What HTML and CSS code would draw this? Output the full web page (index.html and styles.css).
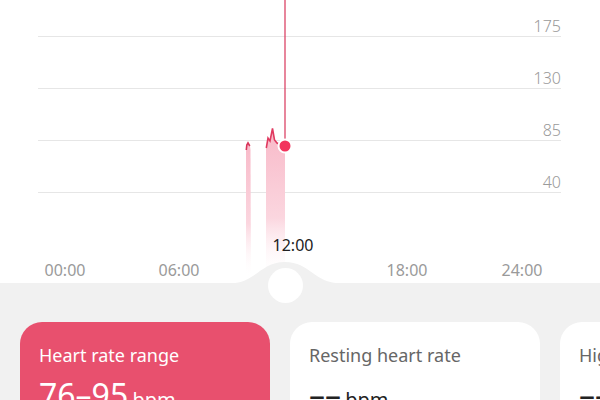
FILE: index.html
```html
<!DOCTYPE html>
<html lang="en">
<head>
<meta charset="utf-8">
<link rel="stylesheet" href="styles.css">
</head>
<body>
<section class="chart">
  <svg class="plot" width="600" height="283" viewBox="0 0 600 283" xmlns="http://www.w3.org/2000/svg">
    <defs>
      <linearGradient id="fillg" x1="0" y1="0" x2="0" y2="1">
        <stop offset="0" stop-color="#f8b9c8"/>
        <stop offset="0.6" stop-color="#fbd6df"/>
        <stop offset="1" stop-color="#ffffff" stop-opacity="0"/>
      </linearGradient>
    </defs>
    <g stroke="#e6e6e6" stroke-width="1">
      <line x1="38" y1="36.5" x2="561" y2="36.5"/>
      <line x1="38" y1="88.5" x2="561" y2="88.5"/>
      <line x1="38" y1="140.5" x2="561" y2="140.5"/>
      <line x1="38" y1="192.5" x2="561" y2="192.5"/>
    </g>
    <g class="ylab" text-anchor="end">
      <text x="561" y="32">175</text>
      <text x="561" y="84">130</text>
      <text x="561" y="136">85</text>
      <text x="561" y="188">40</text>
    </g>
    <path d="M246,150 L246.5,145 L248,142.5 L250,146 L250.5,150 L251,278 L246,278 Z" fill="url(#fillg)"/>
    <path d="M246.3,150 L246.8,145 L248,142.8 L249.8,146" fill="none" stroke="#d8345a" stroke-width="1.6"/>
    <path d="M266,148 L268,138 L270,141 L272.5,128 L274.5,140 L277,143 L285,146 L285,278 L266,278 Z" fill="url(#fillg)"/>
    <path d="M266.3,148 L268,138 L270,141 L272.5,128.5 L274.5,140 L277,143 L283,145.5" fill="none" stroke="#e03a60" stroke-width="1.6"/>
    <line x1="285" y1="0" x2="285" y2="142" stroke="#d8345a" stroke-width="1.2"/>
    <circle cx="285" cy="146" r="6.5" fill="#f2335d" stroke="#ffffff" stroke-width="2"/>
    <text class="sel" x="293" y="251" text-anchor="middle">12:00</text>
    <g class="xlab" text-anchor="middle">
      <text x="65" y="276">00:00</text>
      <text x="179" y="276">06:00</text>
      <text x="407" y="276">18:00</text>
      <text x="522" y="276">24:00</text>
    </g>
    <path d="M228,283.5 C256,283.5 260,262 285,262 C310,262 314,283.5 342,283.5 Z" fill="#f1f1f1"/>
  </svg>
  <div class="handle"></div>
</section>
<section class="stats">
  <div class="card card-active">
    <div class="card-title">Heart rate range</div>
    <div class="card-value"><span class="num">76–95</span> <span class="unit">bpm</span></div>
  </div>
  <div class="card">
    <div class="card-title">Resting heart rate</div>
    <div class="card-value"><span class="num">––</span> <span class="unit">bpm</span></div>
  </div>
  <div class="card">
    <div class="card-title">High heart rate</div>
    <div class="card-value"><span class="num">––</span> <span class="unit">bpm</span></div>
  </div>
</section>
</body>
</html>
```
FILE: styles.css
```css
html, body {
  margin: 0;
  padding: 0;
}
body {
  width: 600px;
  height: 400px;
  overflow: hidden;
  background: #f1f1f1;
  font-family: "Noto Sans", "Open Sans", sans-serif;
}
.chart {
  position: relative;
  height: 283px;
  background: #ffffff;
}
.plot {
  display: block;
  overflow: visible;
}
.ylab text {
  font-family: "Noto Sans", sans-serif;
  font-size: 16px;
  font-weight: 300;
  fill: #9a9a9a;
}
.xlab text {
  font-family: "Noto Sans", sans-serif;
  font-size: 16px;
  fill: #9a9a9a;
}
.sel {
  font-family: "Noto Sans", sans-serif;
  font-size: 16px;
  fill: #222222;
}
.handle {
  position: absolute;
  left: 267.5px;
  top: 267.5px;
  width: 35px;
  height: 35px;
  border-radius: 50%;
  background: #ffffff;
  z-index: 2;
}
.stats {
  display: flex;
  gap: 20px;
  padding: 39px 0 0 20px;
  overflow: hidden;
}
.card {
  flex: 0 0 250px;
  height: 140px;
  box-sizing: border-box;
  padding: 21px 19px;
  border-radius: 22px;
  background: #ffffff;
  color: #222222;
}
.card-active {
  background: #e8506e;
  color: #ffffff;
}
.card-title {
  font-size: 18px;
  color: #666666;
}
.card-active .card-title {
  color: #ffffff;
}
.card-value {
  margin-top: 6px;
  white-space: nowrap;
}
.num {
  font-size: 32px;
}
.unit {
  font-size: 20px;
}
```
